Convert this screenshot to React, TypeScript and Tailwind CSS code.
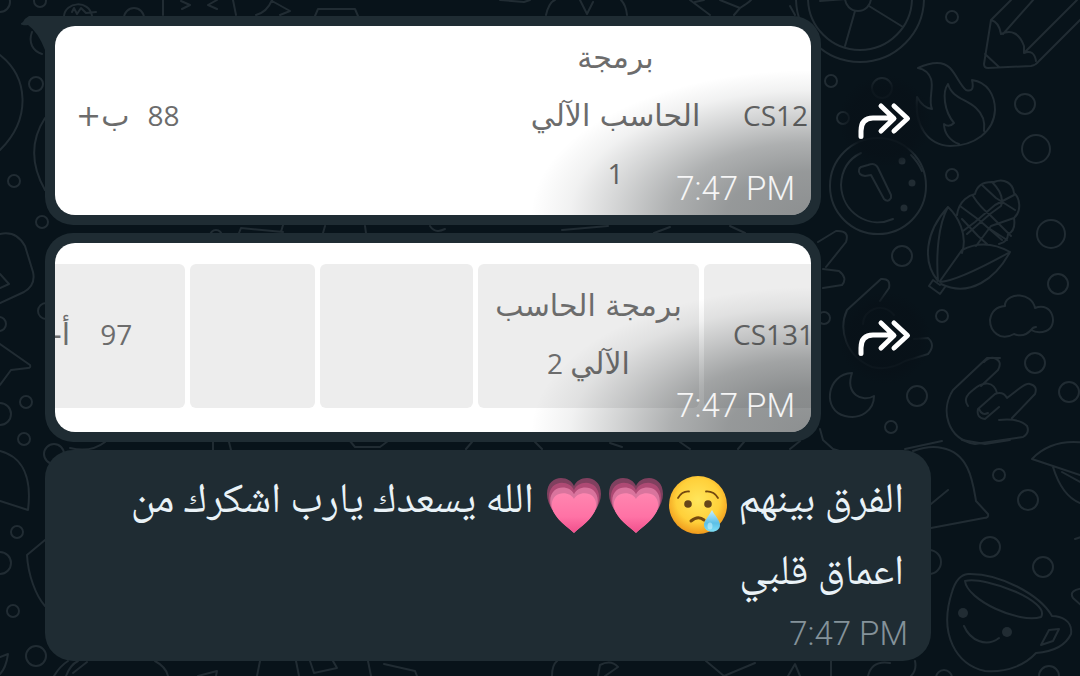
import React from "react";

const TIME = "7:47 PM";

const DOTS: [number, number, number][] = [
  [952, 17, 6], [831, 81, 6], [1025, 104, 10], [1036, 149, 14], [952, 175, 6],
  [882, 88, 10], [843, 118, 6],
  [1051, 234, 14], [902, 256, 10], [1058, 284, 10], [942, 316, 6], [1035, 363, 10],
  [1069, 392, 10], [917, 396, 10], [891, 427, 6], [824, 318, 6], [999, 475, 6],
  [1028, 500, 10], [990, 547, 10], [1043, 567, 10], [929, 562, 12], [1049, 676, 10],
  [944, 678, 8], [36, 84, 7], [14, 181, 6], [42, 222, 6], [40, 1, 6], [0, 2, 10],
  [134, 18, 10], [46, 311, 8], [-1, 324, 7], [26, 402, 6], [0, 414, 11], [24, 439, 6],
  [54, 454, 10], [17, 532, 6], [0, 563, 11], [13, 611, 6], [36, 656, 10],
  [216, 236, 6],
];

const DOODLES = [
  // wheel
  "M855 11 845 46M869 6 903 27M820 1 846 -1",
  // pencil
  "M1011 0 991 20 984 64Q984 68 988 68L1031 66Q1036 65 1039 61L1100 0M1034 -1 1003 34M1077 0 1024 53M991 20Q999 22 1001 34Q1017 27 1024 46V53Q1034 49 1036 61M985 54 999 67",
  // flame
  "M918 68Q940 58 950 68C956 74 960 85 966 90Q975 93 972 80C988 82 995 96 995 110C994 132 974 146 950 146C928 145 914 126 917 97Q923 108 932 109C928 100 934 88 931 79Q928 70 918 68M948 84C952 98 966 99 976 108Q986 117 984 131M948 84C942 92 944 111 954 123Q949 128 944 124C944 133 950 141 959 144",
  // number on the coin
  "M859 170Q858 175 865 176L871 175 884 199Q888 203 891 198L891 195 878 168Q875 162 868 165L861 167Q859 168 859 170M861 153Q842 162 841 185C842 212 868 230 893 219M911 155Q918 162 922 171",
  // corn leaves and cob
  "M940 285 933 280 929 286 940 294 945 287M938 281C922 262 925 232 948 207C958 216 968 235 962 253M938 281C936 255 938 225 948 207M940 281 962 250Q985 238 1010 252C996 278 970 298 941 284M940 282C955 281 983 267 1010 252M957 215C959 200 970 195 975 194Q978 181 994 182C1004 178 1013 183 1014 193C1020 198 1022 211 1014 218Q1016 231 1008 234Q1008 242 999 244M973 196Q980 207 989 214L1011 236M960 206 979 220 1002 240M982 185 996 198 1015 210M992 182Q1005 195 1001 206L990 214 967 234M1014 195 995 205 975 222 963 231M1014 218 991 226 976 246M962 219 978 236 987 244M990 229 1007 240",
  // cloud
  "M1005 304C1008 292 1032 292 1035 308C1053 301 1059 326 1046 331Q1038 334 1031 330Q1024 338 1014 334C1000 342 990 331 990 320Q992 307 1005 306ZM1031 330Q1033 327 1036 327",
  // moon
  "M852 373C826 374 822 411 845 416C861 420 874 410 874 396C862 403 845 394 852 373Z",
  // hands
  "M1000 358 987 358 953 390C940 410 947 439 975 444L1023 437Q1030 433 1027 426 1020 418 999 420M1012 418 1035 394Q1038 386 1030 384 1027 383 1020 388L1007 398Q1003 391 995 394L978 409Q976 418 985 419L999 407M988 413Q982 416 979 409M968 406Q962 398 973 390C984 380 994 382 997 393M981 386 998 370Q1003 361 994 358 989 357 984 362",
  "M881 279 847 310C838 330 846 356 872 367Q889 371 905 361L928 354Q936 345 928 338L914 339M881 279Q891 278 889 288L880 301M863 324C863 310 882 301 894 315M818 242 836 231Q850 230 846 242L826 267M823 269 839 271Q848 278 842 285L823 288",
  // cap
  "M913 451Q930 445 942 448C970 453 973 484 976 501L988 514Q989 518 984 518L931 528M931 504 948 490M1100 446Q1056 434 1032 459L1080 475M1053 467Q1062 496 1080 503M1062 472 1080 482M1075 539 1084 536M1084 588Q1068 590 1073 598L1082 606",
  // cup
  "M968 574Q957 575 952 592C938 635 957 665 985 671C1008 673 1026 664 1036 653Q1063 651 1071 634C1073 620 1060 616 1052 616C1040 595 1000 573 968 574ZM965 581C967 600 1019 624 1041 617C1051 602 987 576 965 581M1049 630 1059 629 1053 641 1041 645ZM964 626C970 640 986 648 999 638",
  "M820 429 823 440 833 449 846 453M905 449 942 441M962 440 985 444 1010 440",
  // left margin
  "M0 55C28 77 32 118 0 150M45 118C30 141 31 165 45 190M32 32C28 43 33 51 42 54M0 234C13 231 20 237 25 246L33 272Q36 285 24 292L0 303M0 274 9 284 0 288M0 344 30 365Q31 368 28 368L11 370 0 385M0 451C23 457 32 478 28 510L0 501M45 540 27 555C28 575 36 596 45 606M0 657 8 654Q6 668 0 674",
  // top edge
  "M64 16C65 2 89 -1 92 16M72 12 74 8 77 14 81 8 86 13 96 12M163 0V15M181 1 190 5 182 9M217 0 208 5 217 9M233 0 236 15M272 0Q267 12 256 15M272 1 290 11 280 15M315 16 318 9H355L358 16M500 0 524 2 530 0M546 15Q549 2 555 0M627 15Q626 5 621 0M580 0 587 14 593 2M690 0 710 15M695 2 704 0M720 0 740 8 734 15M740 8Q748 3 751 0M795 15 790 6",
  // gaps between messages
  "M239 233 241 228 283 232M325 226 323 233M283 225 281 232M365 226 366 233M430 226Q435 234 445 229M562 230 608 226M654 233 670 227M730 226 745 233M70 448Q91 453 105 442M213 442V450M229 442 231 450M350 441 355 447H380L388 441M466 449 472 442M535 442 542 449M610 443 622 447M680 442 690 449M738 449 744 442M790 449 800 441",
  // bottom edge
  "M54 676Q60 666 68 661M66 676Q70 665 78 661M73 673 87 662M155 661Q166 667 168 676M198 676 217 671 216 676M260 661 257 676M296 661 299 676M310 661 314 673 337 668 333 661M368 661 371 676M384 664 415 671 417 676M552 676Q552 665 557 661M598 676 600 665Q611 659 618 667L605 676M706 661 724 676 755 663M788 676 795 664 800 676M831 676V661M868 676Q872 660 890 663M915 661Q917 670 911 676",
];

function Wallpaper() {
  return (
    <svg
      className="pointer-events-none absolute inset-0 size-full"
      viewBox="0 0 1080 676"
      preserveAspectRatio="xMinYMin slice"
      fill="none"
      stroke="#212c33"
      strokeWidth="2"
      strokeLinecap="round"
      strokeLinejoin="round"
      aria-hidden="true"
    >
      {DOTS.map(([cx, cy, r]) => (
        <circle key={`${cx}-${cy}`} cx={cx} cy={cy} r={r} />
      ))}
      <circle cx="860" cy="-2" r="64" />
      <circle cx="860" cy="-2" r="52" />
      <circle cx="858" cy="-2" r="13" />
      <circle cx="878" cy="186" r="48" />
      {DOODLES.map((d) => (
        <path key={d} d={d} />
      ))}
      <g fill="#212c33" stroke="none">
        <circle cx="902" cy="161" r="3.5" />
        <circle cx="912" cy="183" r="3.5" />
        <circle cx="904" cy="208" r="3.5" />
        <circle cx="963" cy="613" r="5" />
        <circle cx="1007" cy="632" r="5" />
      </g>
    </svg>
  );
}

function ForwardButton() {
  return (
    <button
      type="button"
      aria-label="Forward"
      className="flex size-24 shrink-0 items-center justify-center rounded-full bg-[radial-gradient(circle,rgba(8,17,24,0.8)_50%,transparent_68%)]"
    >
      <svg
        className="h-10 w-14"
        viewBox="0 0 56 40"
        fill="none"
        stroke="#ffffff"
        strokeWidth="5"
        strokeLinecap="round"
        strokeLinejoin="round"
        aria-hidden="true"
      >
        <path d="M4 35.500V30Q4 17 16 17H36M24 5 37 17.500 24 30M37 5 50.500 17.500 37 30" />
      </svg>
    </button>
  );
}

function PhotoMessage({ tail, children }: { tail?: boolean; children: React.ReactNode }) {
  return (
    <article className="flex items-center gap-4">
      <div
        className={
          tail
            ? "relative w-full max-w-[776px] rounded-[28px] rounded-tl-none bg-[#1f2c33] p-[10px]"
            : "relative w-full max-w-[776px] rounded-[28px] bg-[#1f2c33] p-[10px]"
        }
      >
        {tail && (
          <svg className="absolute top-0 -left-6 h-9 w-6" viewBox="0 0 24 36" aria-hidden="true">
            <path d="M24 0H8Q4 2 2 6L-1 8Q4 10 7 9Q17 16 24 34Z" fill="#1f2c33" />
          </svg>
        )}
        <div className="relative h-[189px] overflow-hidden rounded-[20px] bg-white font-['Open_Sans','Noto_Sans','DejaVu_Sans',sans-serif] text-[28px] leading-[58px] text-[#6c6c6c]">
          {children}
          <div className="absolute inset-0 bg-[radial-gradient(ellipse_280px_145px_at_100%_100%,rgba(16,22,24,0.48)_0%,rgba(16,22,24,0.44)_30%,rgba(16,22,24,0.34)_50%,rgba(16,22,24,0.18)_70%,rgba(16,22,24,0.06)_86%,transparent_100%)]" />
          <Time className="absolute right-4 bottom-[3px] text-white/90" />
        </div>
      </div>
      <ForwardButton />
    </article>
  );
}

function Arabic({ children }: { children: React.ReactNode }) {
  return (
    <span className="font-['DejaVu_Sans',sans-serif] text-[30px] leading-none" lang="ar" dir="rtl">
      {children}
    </span>
  );
}

function Time({ className }: { className: string }) {
  return (
    <time
      dateTime="19:47"
      className={`font-['Roboto',sans-serif] text-[33px] leading-[46px] font-light ${className}`}
    >
      {TIME}
    </time>
  );
}

function Heart({ id }: { id: string }) {
  const shape =
    "M29 57C22 50 2 36 2 19C2 8 9 3 16 3C22 3 27 6 29 11C31 6 36 3 42 3C49 3 56 8 56 19C56 36 36 50 29 57Z";
  return (
    <svg className="mx-[2px] inline-block size-[58px] align-[-22px]" viewBox="0 0 58 58" role="img" aria-label="💗">
      <defs>
        <linearGradient id={id} x1="0" y1="0" x2="0" y2="1">
          <stop offset="0" stopColor="#ff86b0" />
          <stop offset="0.6" stopColor="#ff72a5" />
          <stop offset="1" stopColor="#f0508c" />
        </linearGradient>
      </defs>
      <path d={shape} fill="#80405f" transform="translate(0 -1)" />
      <path d={shape} fill="#ae4a74" transform="translate(2 4) scale(.93)" />
      <path d={shape} fill="#d9749d" transform="translate(3.500 9) scale(.88 .84)" />
      <path d={shape} fill={`url(#${id})`} transform="translate(5.200 15) scale(.82 .73)" />
    </svg>
  );
}

function CryingFace() {
  return (
    <svg className="mx-[2px] inline-block size-[58px] align-[-22px]" viewBox="0 0 58 58" role="img" aria-label="😢">
      <defs>
        <radialGradient id="face" cx="0.5" cy="0.42" r="0.58">
          <stop offset="0" stopColor="#ffe65c" />
          <stop offset="0.65" stopColor="#ffd03a" />
          <stop offset="1" stopColor="#f09a1c" />
        </radialGradient>
        <linearGradient id="tear" x1="0" y1="0" x2="0" y2="1">
          <stop offset="0" stopColor="#c8f0ff" />
          <stop offset="0.6" stopColor="#5cbfe6" />
          <stop offset="1" stopColor="#7fe0f7" />
        </linearGradient>
      </defs>
      <circle cx="29" cy="29" r="29" fill="url(#face)" />
      <g fill="none" stroke="#73490f" strokeLinecap="round">
        <path d="M9 22Q13 15 20 15.500M37 15.500Q45 15 49 22" strokeWidth="1.800" />
        <path d="M22 45Q29 39 35 44" strokeWidth="3" />
      </g>
      <circle cx="19" cy="28" r="3.800" fill="#65451a" />
      <circle cx="39" cy="28" r="3.800" fill="#65451a" />
      <path d="M43 34C39 41 35 45 35 49C35 58 51 58 51 49C51 44 46 40 43 34Z" fill="url(#tear)" />
      <ellipse cx="41" cy="50" rx="2.500" ry="3.500" fill="#d6f7ff" opacity="0.5" />
    </svg>
  );
}

export default function App() {
  return (
    <main className="relative min-h-screen overflow-hidden bg-[#08131a]">
      <Wallpaper />
      <div className="relative flex flex-col gap-2 pt-4 pr-8 pb-[15px] pl-[45px]">
        <PhotoMessage tail>
          <table className="mt-[2px] w-full table-fixed text-center">
            <colgroup>
              <col className="w-[210px]" />
              <col className="w-[239px]" />
              <col className="w-[223px]" />
              <col />
            </colgroup>
            <tbody>
              <tr>
                <td className="p-0">
                  <div className="flex gap-[18px] pl-[21px]">
                    <span>
                      <Arabic>ب+</Arabic>
                    </span>
                    <span>88</span>
                  </div>
                </td>
                <td className="p-0" />
                <td className="px-4 py-0" dir="rtl">
                  <Arabic>
                    برمجة
                    <br />
                    الحاسب الآلي
                  </Arabic>
                  <br />1
                </td>
                <td className="py-0 pr-0 pl-4 text-left">CS12</td>
              </tr>
            </tbody>
          </table>
        </PhotoMessage>

        <PhotoMessage>
          <div className="-mx-[5px] pt-[21px]">
            <table className="h-[144px] w-full table-fixed border-separate border-spacing-x-[5px] border-spacing-y-0 text-center">
              <colgroup>
                <col className="w-[130px]" />
                <col className="w-[125px]" />
                <col className="w-[153px]" />
                <col className="w-[221px]" />
                <col />
              </colgroup>
              <tbody>
                <tr>
                  <td className="rounded-r-md bg-[#ededed] px-0 pt-0 pb-1">
                    <div className="-ml-1 flex gap-[30px]">
                      <span>
                        <Arabic>أ-</Arabic>
                      </span>
                      <span>97</span>
                    </div>
                  </td>
                  <td className="rounded-md bg-[#ededed] p-0" />
                  <td className="rounded-md bg-[#ededed] p-0" />
                  <td className="rounded-md bg-[#ededed] px-0 pt-0 pb-1" dir="rtl">
                    <Arabic>
                      برمجة الحاسب
                      <br />
                      الآلي
                    </Arabic>{" "}
                    2
                  </td>
                  <td className="rounded-l-md bg-[#ededed] pt-0 pr-0 pb-1 pl-[29px] text-left whitespace-nowrap">
                    CS131
                  </td>
                </tr>
              </tbody>
            </table>
          </div>
        </PhotoMessage>

        <article className="flex w-full max-w-[886px] flex-col rounded-[28px] bg-[#1f2c33] px-[27px] pt-[17px] pb-1">
          <p
            dir="rtl"
            className="font-['Noto_Naskh_Arabic','Noto_Sans_Arabic',sans-serif] text-[42px] leading-[72px] text-[#e9f2f7]"
          >
            الفرق بينهم <CryingFace />
            <Heart id="heart-a" />
            <Heart id="heart-b" /> الله يسعدك يارب اشكرك من اعماق قلبي
          </p>
          <Time className="-mr-1 self-end text-[#84929a]" />
        </article>
      </div>
    </main>
  );
}
